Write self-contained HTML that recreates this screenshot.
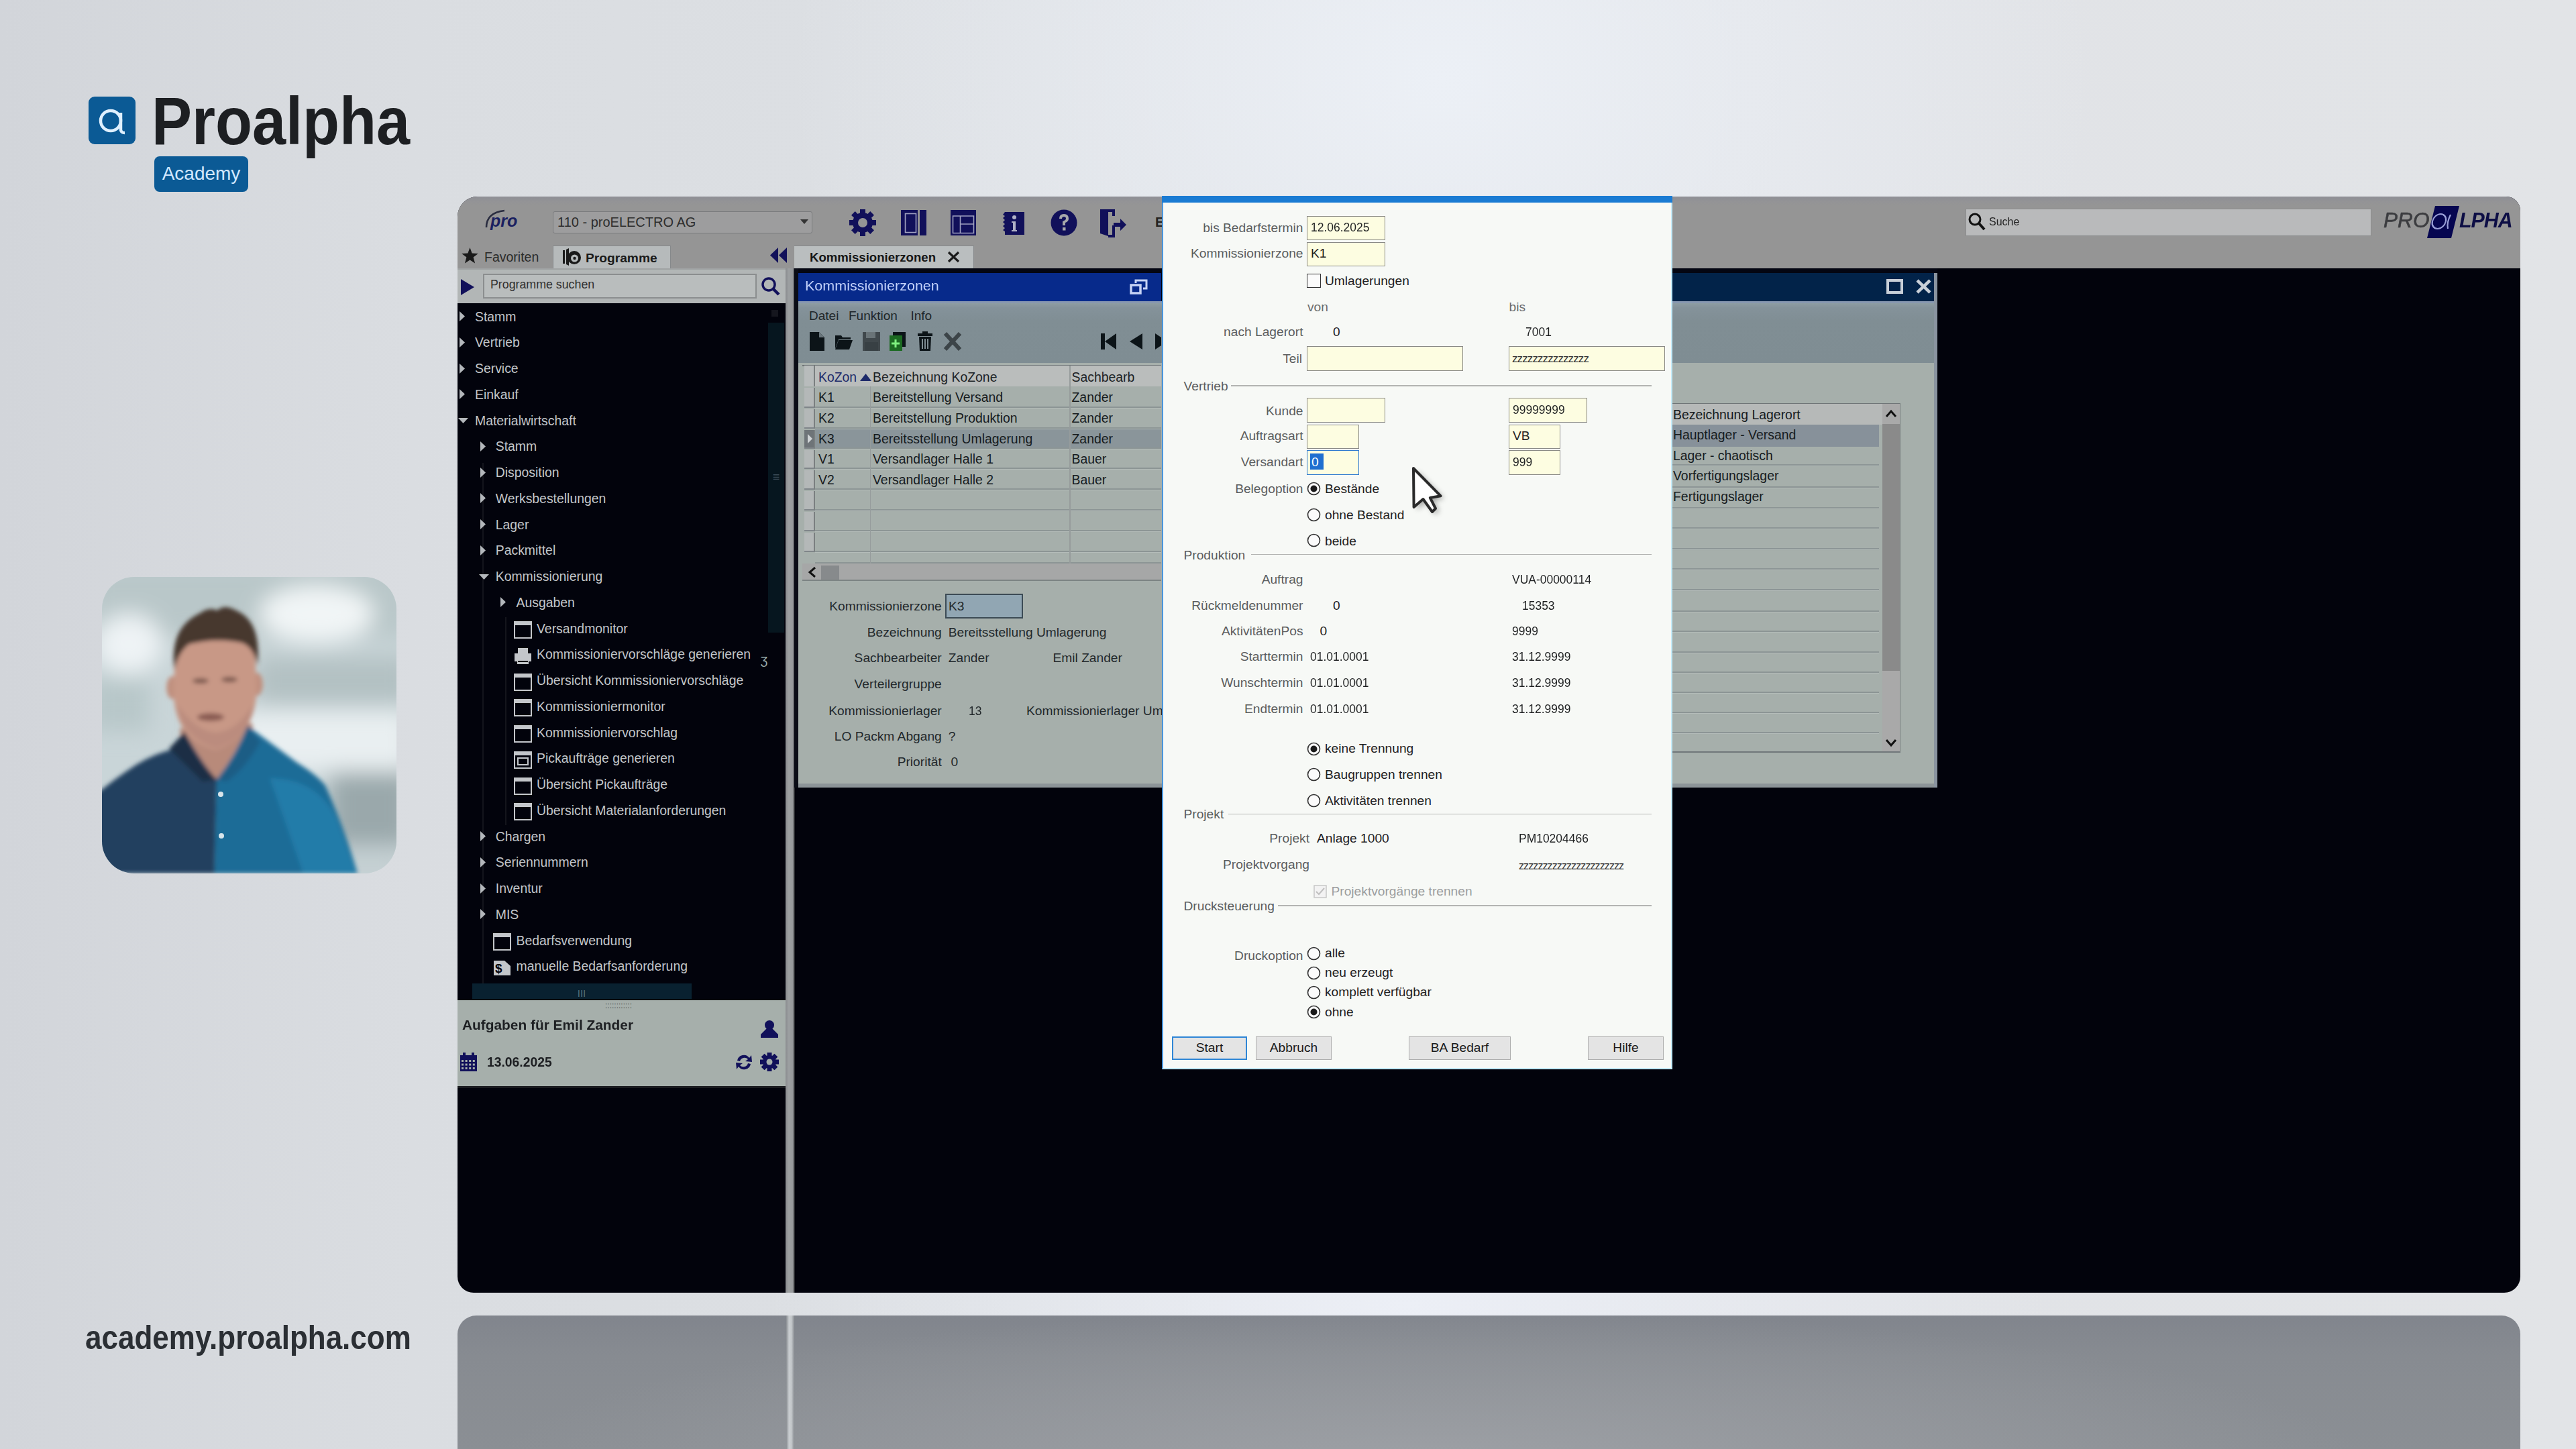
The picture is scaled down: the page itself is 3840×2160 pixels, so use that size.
<!DOCTYPE html>
<html><head><meta charset="utf-8"><title>Proalpha Academy</title>
<style>
html,body{margin:0;padding:0;}
body{width:3840px;height:2160px;position:relative;overflow:hidden;font-family:"Liberation Sans", sans-serif;
background:radial-gradient(ellipse 1300px 1000px at 2150px 120px, rgba(236,240,246,1) 0%, rgba(236,240,246,0) 75%), radial-gradient(ellipse 1200px 300px at 2100px 1945px, rgba(236,239,246,1) 0%, rgba(236,239,246,0) 80%), linear-gradient(90deg,#d2d5da 0%,#dadde1 16%,#dde0e4 40%,#e1e3e7 70%,#e2e4e7 100%);}
div{box-sizing:border-box;}
</style></head><body>
<div style="position:absolute;left:132px;top:144px;width:70px;height:71px;background:#0b5a95;border-radius:9px;"></div><svg style="position:absolute;left:132px;top:144px;" width="70" height="71" viewBox="0 0 70 71"><circle cx="33" cy="36" r="15" fill="none" stroke="#dff0ff" stroke-width="4.5"/><path d="M48 24 L48 50 Q49 54 54 54" fill="none" stroke="#dff0ff" stroke-width="4.5"/></svg><div style="position:absolute;left:226px;top:130.35px;font-size:100px;line-height:1;font-weight:700;color:#1d1f22;white-space:nowrap;transform:scaleX(0.9);transform-origin:left top;">Proalpha</div><div style="position:absolute;left:230px;top:233px;width:140px;height:53px;background:#0b5a95;border-radius:8px;"></div><div style="position:absolute;left:-700px;width:2000px;text-align:center;top:245.30px;font-size:28px;line-height:1;font-weight:400;color:#d2e8ff;white-space:nowrap;">Academy</div><div style="position:absolute;left:127px;top:1968.67px;font-size:50px;line-height:1;font-weight:700;color:#2b2f34;white-space:nowrap;transform:scaleX(0.88);transform-origin:left top;">academy.proalpha.com</div><svg style="position:absolute;left:152px;top:860px;" width="439" height="442" viewBox="0 0 439 442">
    <defs>
      <filter id="bl" x="-50%" y="-50%" width="200%" height="200%"><feGaussianBlur stdDeviation="16"/></filter>
      <filter id="bl2" x="-50%" y="-50%" width="200%" height="200%"><feGaussianBlur stdDeviation="3"/></filter>
      <clipPath id="vc"><rect x="0" y="0" width="439" height="442" rx="48"/></clipPath>
    </defs>
    <g clip-path="url(#vc)">
      <rect width="439" height="442" fill="#c9d5d8"/>
      <g filter="url(#bl)">
        <rect x="-20" y="-20" width="480" height="110" fill="#b9c7c9"/>
        <ellipse cx="320" cy="55" rx="85" ry="42" fill="#f1f5f6"/>
        <ellipse cx="40" cy="100" rx="50" ry="45" fill="#eef3f5"/>
        <rect x="-20" y="150" width="90" height="80" fill="#b8c7c9"/>
        <rect x="230" y="120" width="230" height="70" fill="#b3c1c3"/>
        <rect x="200" y="200" width="260" height="90" fill="#e9eff1"/>
        <rect x="340" y="290" width="120" height="110" fill="#9aa8ab"/>
        <rect x="330" y="400" width="120" height="60" fill="#c5d0d3"/>
      </g>
      <g filter="url(#bl2)">
        <path d="M116 226 L122 285 L176 304 L228 268 L224 218 Z" fill="#b88a7a"/>
        <ellipse cx="105" cy="165" rx="9" ry="17" fill="#c0907f"/>
        <ellipse cx="231" cy="160" rx="9" ry="17" fill="#c0907f"/>
        <path d="M108 132 Q108 86 168 82 Q230 86 229 132 L230 178 Q224 240 170 258 Q112 244 107 180 Z" fill="#c89886"/><path d="M112 190 Q120 240 170 256 Q220 240 226 190 Q200 230 170 232 Q140 230 112 190 Z" fill="#b5887a" opacity="0.7"/>
        <path d="M108 138 Q100 76 146 54 Q160 44 172 50 Q182 40 200 50 Q238 66 232 132 Q226 104 208 98 Q170 90 130 100 Q114 112 108 138 Z" fill="#47372f"/>
        <ellipse cx="147" cy="155" rx="12" ry="4" fill="#7e5a4f"/>
        <ellipse cx="190" cy="153" rx="12" ry="4" fill="#7e5a4f"/>
        <ellipse cx="162" cy="209" rx="20" ry="6" fill="#8a5c52"/>
        <path d="M-10 442 L-10 325 Q20 300 51 280 Q80 262 111 256 L123 231 Q150 280 171 302 L168 442 Z" fill="#223f5e"/>
        <path d="M100 256 L123 231 Q140 275 171 302 L150 305 Z" fill="#1a2d45"/>
        <path d="M168 442 L171 302 Q200 265 217 222 Q255 250 291 277 Q320 295 333 311 Q360 370 381 442 Z" fill="#1f6c97"/>
        <path d="M171 302 Q205 268 217 222 L236 246 Q212 288 186 305 Z" fill="#1a5d85"/>
        <path d="M250 300 Q320 300 350 360 L380 442 L300 442 Z" fill="#2283b0" opacity="0.7"/>
      </g>
      <circle cx="177" cy="324" r="4" fill="#d8e4ea"/>
      <circle cx="178" cy="386" r="4" fill="#d8e4ea"/>
    </g></svg><div style="position:absolute;left:682px;top:1961px;width:3075px;height:239px;background:radial-gradient(ellipse 1400px 240px at 1450px 230px, rgba(158,161,166,1) 0%, rgba(158,161,166,0) 100%), linear-gradient(180deg,#81858d 0%,#878b91 25%,#8c9095 100%);border-radius:28px 28px 0 0;"></div><div style="position:absolute;left:1172px;top:1961px;width:12px;height:199px;background:linear-gradient(90deg,#8a8e93 0%,#c9cdd0 35%,#c4c8cb 65%,#8a8e93 100%);"></div><div style="position:absolute;left:682px;top:293px;width:3075px;height:1634px;background:#02030c;border-radius:30px 21px 24px 24px;overflow:hidden;"></div><div style="position:absolute;left:682px;top:293px;width:3075px;height:107px;background:linear-gradient(180deg,#8e8f95 0px,#939396 7px,#959595 12px,#959595 100%);border-radius:30px 21px 0 0;"></div><svg style="position:absolute;left:718px;top:308px;" width="52" height="38" viewBox="0 0 52 38"><path d="M7 31 Q7 9 34 6" fill="none" stroke="#2a2d40" stroke-width="2.6"/></svg><div style="position:absolute;left:731px;top:316.84px;font-size:25px;line-height:1;font-weight:700;color:#1a2060;white-space:nowrap;font-style:italic;">pro</div><div style="position:absolute;left:824px;top:315px;width:387px;height:33px;background:#9d9d9e;border:1.5px solid #7a7b7d;border-radius:3px;"></div><div style="position:absolute;left:831px;top:321.07px;font-size:20px;line-height:1;font-weight:400;color:#2d2d2d;white-space:nowrap;">110 - proELECTRO AG</div><svg style="position:absolute;left:1193px;top:327px;" width="12" height="8" viewBox="0 0 12 8"><path d="M0 0 L12 0 L6 7 Z" fill="#333"/></svg><svg style="position:absolute;left:1264px;top:310px;" width="44" height="44" viewBox="0 0 44 44"><rect x="18" y="2" width="8" height="9" fill="#11105a" transform="rotate(0 22 22)"/><rect x="18" y="2" width="8" height="9" fill="#11105a" transform="rotate(45 22 22)"/><rect x="18" y="2" width="8" height="9" fill="#11105a" transform="rotate(90 22 22)"/><rect x="18" y="2" width="8" height="9" fill="#11105a" transform="rotate(135 22 22)"/><rect x="18" y="2" width="8" height="9" fill="#11105a" transform="rotate(180 22 22)"/><rect x="18" y="2" width="8" height="9" fill="#11105a" transform="rotate(225 22 22)"/><rect x="18" y="2" width="8" height="9" fill="#11105a" transform="rotate(270 22 22)"/><rect x="18" y="2" width="8" height="9" fill="#11105a" transform="rotate(315 22 22)"/><circle cx="22" cy="22" r="15" fill="#11105a"/><circle cx="22" cy="22" r="7" fill="#959595"/></svg><svg style="position:absolute;left:1342px;top:312px;" width="40" height="40" viewBox="0 0 40 40"><rect x="1" y="1" width="38" height="38" fill="#11105a"/><rect x="7.5" y="6.5" width="16" height="28" fill="none" stroke="#9fa0c0" stroke-width="1.6"/><rect x="26" y="1" width="3" height="38" fill="#959595"/></svg><svg style="position:absolute;left:1416px;top:312px;" width="40" height="40" viewBox="0 0 40 40"><rect x="1" y="1" width="38" height="38" fill="#11105a"/><path d="M4.5 10 L4.5 35.5 L35.5 35.5 L35.5 10 Z M15.5 10 L15.5 35.5 M15.5 22 L35.5 22" fill="none" stroke="#9fa0c0" stroke-width="1.6"/></svg><svg style="position:absolute;left:1493px;top:312px;" width="36" height="40" viewBox="0 0 36 40"><path d="M5 4 L34 4 L34 38 L5 38 L5 33 L2 31 L5 28 L2 25 L5 22 L2 19 L5 16 L2 13 L5 10 L2 8 Z" fill="#11105a"/><circle cx="19" cy="12" r="3" fill="#b0b1c6"/><path d="M15 18 L21 18 L21 31 L23 31 L23 33 L15 33 L15 31 L17 31 L17 20 L15 20 Z" fill="#b0b1c6"/></svg><svg style="position:absolute;left:1565px;top:311px;" width="42" height="42" viewBox="0 0 42 42"><circle cx="21" cy="21" r="19.5" fill="#11105a"/><path d="M14 15 Q14 8 21 8 Q28 8 28 15 Q28 19 23 21 L23 25 L19 25 L19 19 Q24 17 24 15 Q24 12 21 12 Q18 12 18 15 Z" fill="#a7a8aa"/><rect x="19" y="28" width="4.5" height="4.5" fill="#a7a8aa"/></svg><svg style="position:absolute;left:1638px;top:310px;" width="42" height="44" viewBox="0 0 42 44"><path d="M2 2 L24 2 L24 12 L20 12 L20 6 L14 6 L14 42 L2 38 Z" fill="#11105a"/><path d="M20 26 L20 40 L14 40 L14 44 L24 44 L24 26 Z" fill="#11105a"/><path d="M22 22 L32 22 L32 16 L41 25 L32 34 L32 28 L22 28 Z" fill="#11105a"/></svg><div style="position:absolute;left:1722px;top:321.07px;font-size:20px;line-height:1;font-weight:700;color:#222;white-space:nowrap;">E</div><div style="position:absolute;left:2930px;top:311px;width:605px;height:41px;background:#b9babb;border:1.5px solid #8a8b8c;"></div><svg style="position:absolute;left:2933px;top:316px;" width="28" height="30" viewBox="0 0 28 30"><circle cx="11" cy="11" r="8" fill="none" stroke="#111" stroke-width="3"/><path d="M17 17 L25 26" stroke="#111" stroke-width="4"/></svg><div style="position:absolute;left:2965px;top:321.61px;font-size:17px;line-height:1;font-weight:400;color:#222;white-space:nowrap;transform:scaleX(0.94);transform-origin:left top;">Suche</div><div style="position:absolute;left:3553px;top:312.76px;font-size:31px;line-height:1;font-weight:400;color:#3c3d40;white-space:nowrap;transform:scaleX(1.02);transform-origin:left top;font-style:italic;-webkit-text-stroke:0.6px #3c3d40;">PRO</div><svg style="position:absolute;left:3616px;top:306px;" width="52" height="50" viewBox="0 0 52 50"><path d="M14 1 L50 1 L38 49 L2 49 Z" fill="#060650"/><ellipse cx="25" cy="24" rx="10" ry="11" transform="skewX(-12)" fill="none" stroke="#9aa0d8" stroke-width="2.2"/><path d="M37 14 Q31 26 33 35" fill="none" stroke="#9aa0d8" stroke-width="2.2"/></svg><div style="position:absolute;left:3666px;top:312.76px;font-size:31px;line-height:1;font-weight:700;color:#0d0e45;white-space:nowrap;transform:scaleX(0.98);transform-origin:left top;font-style:italic;letter-spacing:-1px;">LPHA</div><svg style="position:absolute;left:688px;top:369px;" width="25" height="24" viewBox="0 0 25 24"><path d="M12.5 0 L15.6 8.6 L24.8 8.9 L17.6 14.6 L20.1 23.5 L12.5 18.4 L4.9 23.5 L7.4 14.6 L0.2 8.9 L9.4 8.6 Z" fill="#1a1a1a"/></svg><div style="position:absolute;left:722px;top:374.49px;font-size:19.5px;line-height:1;font-weight:400;color:#2a2a2a;white-space:nowrap;">Favoriten</div><div style="position:absolute;left:824px;top:366px;width:176px;height:35px;background:#b6babb;border-top:1.5px solid #85888a;border-left:1.5px solid #85888a;border-right:1.5px solid #85888a;"></div><svg style="position:absolute;left:838px;top:368px;" width="28" height="30" viewBox="0 0 28 30"><rect x="1" y="5" width="3" height="20" fill="#1a1a1a"/><path d="M6 4 L10 2 L10 28 L6 26 Z" fill="#1a1a1a"/><circle cx="18" cy="16" r="10" fill="#1a1a1a"/><circle cx="18.5" cy="17" r="5.5" fill="#b6babb"/><circle cx="18.5" cy="17" r="2.2" fill="#1a1a1a"/></svg><div style="position:absolute;left:873px;top:374.75px;font-size:19.2px;line-height:1;font-weight:700;color:#1a1a1a;white-space:nowrap;">Programme</div><svg style="position:absolute;left:1148px;top:369px;" width="26" height="23" viewBox="0 0 26 23"><path d="M12 0 L12 23 L0 11.5 Z" fill="#11105a"/><path d="M25 0 L25 23 L13 11.5 Z" fill="#11105a"/></svg><div style="position:absolute;left:1184px;top:366px;width:268px;height:35px;background:#babebf;border-top:1.5px solid #85888a;border-right:1.5px solid #85888a;"></div><div style="position:absolute;left:1207px;top:375.26px;font-size:18.6px;line-height:1;font-weight:700;color:#161616;white-space:nowrap;">Kommissionierzonen</div><svg style="position:absolute;left:1412px;top:374px;" width="19" height="18" viewBox="0 0 19 18"><path d="M2 2 L17 16 M17 2 L2 16" stroke="#1a1a1a" stroke-width="3.2"/></svg><div style="position:absolute;left:1171px;top:400px;width:12px;height:1527px;background:linear-gradient(90deg,#8a8c8f 0%,#9c9fa1 40%,#95979a 100%);"></div><div style="position:absolute;left:1183px;top:400px;width:2px;height:1527px;background:#2a2c30;"></div><div style="position:absolute;left:682px;top:400px;width:489px;height:52px;background:#b2b6b6;border-top:2px solid #a0a3a4;"></div><svg style="position:absolute;left:686px;top:415px;" width="22" height="26" viewBox="0 0 22 26"><path d="M1 1 L21 13 L1 25 Z" fill="#11105a"/></svg><div style="position:absolute;left:720px;top:408px;width:408px;height:37px;background:#b9bdbd;border:2px solid #8b8e8f;"></div><div style="position:absolute;left:731px;top:415.93px;font-size:17.8px;line-height:1;font-weight:400;color:#303030;white-space:nowrap;">Programme suchen</div><svg style="position:absolute;left:1134px;top:412px;" width="30" height="30" viewBox="0 0 30 30"><circle cx="12" cy="12" r="9" fill="none" stroke="#11105a" stroke-width="3.5"/><path d="M18 18 L27 27" stroke="#11105a" stroke-width="4.5"/></svg><div style="position:absolute;left:682px;top:452px;width:489px;height:1039px;background:#02030c;"></div><div style="position:absolute;left:1145px;top:481px;width:24px;height:462px;background:#06161f;"></div><div style="position:absolute;left:1150px;top:462px;width:10px;height:10px;background:#15161e;"></div><div style="position:absolute;left:157px;width:2000px;text-align:center;top:701.76px;font-size:18px;line-height:1;font-weight:400;color:#3a4a55;white-space:nowrap;">≡</div><div style="position:absolute;left:719px;top:690px;width:2px;height:790px;background:#14151c;"></div><div style="position:absolute;left:753px;top:920px;width:2px;height:310px;background:#14151c;"></div><div style="position:absolute;left:688px;top:660px;width:2px;height:10px;background:#02030c;"></div><svg style="position:absolute;left:685.0px;top:464.0px;" width="9" height="15" viewBox="0 0 9 15"><path d="M0 0 L8 7.5 L0 15 Z" fill="#b4b8bc"/></svg><div style="position:absolute;left:708.0px;top:462.58px;font-size:19.4px;line-height:1;font-weight:400;color:#c3c6ca;white-space:nowrap;">Stamm</div><svg style="position:absolute;left:685.0px;top:502.75px;" width="9" height="15" viewBox="0 0 9 15"><path d="M0 0 L8 7.5 L0 15 Z" fill="#b4b8bc"/></svg><div style="position:absolute;left:708.0px;top:501.33px;font-size:19.4px;line-height:1;font-weight:400;color:#c3c6ca;white-space:nowrap;">Vertrieb</div><svg style="position:absolute;left:685.0px;top:541.5px;" width="9" height="15" viewBox="0 0 9 15"><path d="M0 0 L8 7.5 L0 15 Z" fill="#b4b8bc"/></svg><div style="position:absolute;left:708.0px;top:540.08px;font-size:19.4px;line-height:1;font-weight:400;color:#c3c6ca;white-space:nowrap;">Service</div><svg style="position:absolute;left:685.0px;top:580.25px;" width="9" height="15" viewBox="0 0 9 15"><path d="M0 0 L8 7.5 L0 15 Z" fill="#b4b8bc"/></svg><div style="position:absolute;left:708.0px;top:578.83px;font-size:19.4px;line-height:1;font-weight:400;color:#c3c6ca;white-space:nowrap;">Einkauf</div><svg style="position:absolute;left:683.0px;top:623.0px;" width="15" height="9" viewBox="0 0 15 9"><path d="M0 0 L15 0 L7.5 8 Z" fill="#b4b8bc"/></svg><div style="position:absolute;left:708.0px;top:617.58px;font-size:19.4px;line-height:1;font-weight:400;color:#c3c6ca;white-space:nowrap;">Materialwirtschaft</div><svg style="position:absolute;left:715.5px;top:657.75px;" width="9" height="15" viewBox="0 0 9 15"><path d="M0 0 L8 7.5 L0 15 Z" fill="#b4b8bc"/></svg><div style="position:absolute;left:738.75px;top:656.33px;font-size:19.4px;line-height:1;font-weight:400;color:#c3c6ca;white-space:nowrap;">Stamm</div><svg style="position:absolute;left:715.5px;top:696.5px;" width="9" height="15" viewBox="0 0 9 15"><path d="M0 0 L8 7.5 L0 15 Z" fill="#b4b8bc"/></svg><div style="position:absolute;left:738.75px;top:695.08px;font-size:19.4px;line-height:1;font-weight:400;color:#c3c6ca;white-space:nowrap;">Disposition</div><svg style="position:absolute;left:715.5px;top:735.25px;" width="9" height="15" viewBox="0 0 9 15"><path d="M0 0 L8 7.5 L0 15 Z" fill="#b4b8bc"/></svg><div style="position:absolute;left:738.75px;top:733.83px;font-size:19.4px;line-height:1;font-weight:400;color:#c3c6ca;white-space:nowrap;">Werksbestellungen</div><svg style="position:absolute;left:715.5px;top:774.0px;" width="9" height="15" viewBox="0 0 9 15"><path d="M0 0 L8 7.5 L0 15 Z" fill="#b4b8bc"/></svg><div style="position:absolute;left:738.75px;top:772.58px;font-size:19.4px;line-height:1;font-weight:400;color:#c3c6ca;white-space:nowrap;">Lager</div><svg style="position:absolute;left:715.5px;top:812.75px;" width="9" height="15" viewBox="0 0 9 15"><path d="M0 0 L8 7.5 L0 15 Z" fill="#b4b8bc"/></svg><div style="position:absolute;left:738.75px;top:811.33px;font-size:19.4px;line-height:1;font-weight:400;color:#c3c6ca;white-space:nowrap;">Packmittel</div><svg style="position:absolute;left:713.5px;top:855.5px;" width="15" height="9" viewBox="0 0 15 9"><path d="M0 0 L15 0 L7.5 8 Z" fill="#b4b8bc"/></svg><div style="position:absolute;left:738.75px;top:850.08px;font-size:19.4px;line-height:1;font-weight:400;color:#c3c6ca;white-space:nowrap;">Kommissionierung</div><svg style="position:absolute;left:746.0px;top:890.25px;" width="9" height="15" viewBox="0 0 9 15"><path d="M0 0 L8 7.5 L0 15 Z" fill="#b4b8bc"/></svg><div style="position:absolute;left:769.5px;top:888.83px;font-size:19.4px;line-height:1;font-weight:400;color:#c3c6ca;white-space:nowrap;">Ausgaben</div><svg style="position:absolute;left:765.5px;top:926.0px;" width="27" height="27" viewBox="0 0 27 27"><rect x="1" y="1" width="25" height="24" fill="none" stroke="#c3c6ca" stroke-width="2"/><rect x="1" y="1" width="25" height="5" fill="#c3c6ca"/></svg><div style="position:absolute;left:800px;top:927.58px;font-size:19.4px;line-height:1;font-weight:400;color:#c3c6ca;white-space:nowrap;">Versandmonitor</div><svg style="position:absolute;left:765.5px;top:964.75px;" width="27" height="27" viewBox="0 0 27 27"><rect x="6" y="1" width="15" height="8" fill="#c3c6ca"/><rect x="1" y="9" width="25" height="12" fill="#c3c6ca"/><rect x="5" y="18" width="17" height="7" fill="#c3c6ca"/><rect x="6" y="20" width="15" height="2" fill="#02030c"/></svg><div style="position:absolute;left:800px;top:966.33px;font-size:19.4px;line-height:1;font-weight:400;color:#c3c6ca;white-space:nowrap;">Kommissioniervorschläge generieren</div><svg style="position:absolute;left:765.5px;top:1003.5px;" width="27" height="27" viewBox="0 0 27 27"><rect x="1" y="1" width="25" height="24" fill="none" stroke="#c3c6ca" stroke-width="2"/><rect x="1" y="1" width="25" height="5" fill="#c3c6ca"/></svg><div style="position:absolute;left:800px;top:1005.08px;font-size:19.4px;line-height:1;font-weight:400;color:#c3c6ca;white-space:nowrap;">Übersicht Kommissioniervorschläge</div><svg style="position:absolute;left:765.5px;top:1042.25px;" width="27" height="27" viewBox="0 0 27 27"><rect x="1" y="1" width="25" height="24" fill="none" stroke="#c3c6ca" stroke-width="2"/><rect x="1" y="1" width="25" height="5" fill="#c3c6ca"/></svg><div style="position:absolute;left:800px;top:1043.83px;font-size:19.4px;line-height:1;font-weight:400;color:#c3c6ca;white-space:nowrap;">Kommissioniermonitor</div><svg style="position:absolute;left:765.5px;top:1081.0px;" width="27" height="27" viewBox="0 0 27 27"><rect x="1" y="1" width="25" height="24" fill="none" stroke="#c3c6ca" stroke-width="2"/><rect x="1" y="1" width="25" height="5" fill="#c3c6ca"/></svg><div style="position:absolute;left:800px;top:1082.58px;font-size:19.4px;line-height:1;font-weight:400;color:#c3c6ca;white-space:nowrap;">Kommissioniervorschlag</div><svg style="position:absolute;left:765.5px;top:1119.75px;" width="27" height="27" viewBox="0 0 27 27"><rect x="1" y="1" width="25" height="24" fill="none" stroke="#c3c6ca" stroke-width="2"/><rect x="1" y="1" width="25" height="5" fill="#c3c6ca"/><rect x="6" y="10" width="15" height="10" fill="none" stroke="#c3c6ca" stroke-width="2"/></svg><div style="position:absolute;left:800px;top:1121.33px;font-size:19.4px;line-height:1;font-weight:400;color:#c3c6ca;white-space:nowrap;">Pickaufträge generieren</div><svg style="position:absolute;left:765.5px;top:1158.5px;" width="27" height="27" viewBox="0 0 27 27"><rect x="1" y="1" width="25" height="24" fill="none" stroke="#c3c6ca" stroke-width="2"/><rect x="1" y="1" width="25" height="5" fill="#c3c6ca"/></svg><div style="position:absolute;left:800px;top:1160.08px;font-size:19.4px;line-height:1;font-weight:400;color:#c3c6ca;white-space:nowrap;">Übersicht Pickaufträge</div><svg style="position:absolute;left:765.5px;top:1197.25px;" width="27" height="27" viewBox="0 0 27 27"><rect x="1" y="1" width="25" height="24" fill="none" stroke="#c3c6ca" stroke-width="2"/><rect x="1" y="1" width="25" height="5" fill="#c3c6ca"/></svg><div style="position:absolute;left:800px;top:1198.83px;font-size:19.4px;line-height:1;font-weight:400;color:#c3c6ca;white-space:nowrap;">Übersicht Materialanforderungen</div><svg style="position:absolute;left:715.5px;top:1239.0px;" width="9" height="15" viewBox="0 0 9 15"><path d="M0 0 L8 7.5 L0 15 Z" fill="#b4b8bc"/></svg><div style="position:absolute;left:738.75px;top:1237.58px;font-size:19.4px;line-height:1;font-weight:400;color:#c3c6ca;white-space:nowrap;">Chargen</div><svg style="position:absolute;left:715.5px;top:1277.75px;" width="9" height="15" viewBox="0 0 9 15"><path d="M0 0 L8 7.5 L0 15 Z" fill="#b4b8bc"/></svg><div style="position:absolute;left:738.75px;top:1276.33px;font-size:19.4px;line-height:1;font-weight:400;color:#c3c6ca;white-space:nowrap;">Seriennummern</div><svg style="position:absolute;left:715.5px;top:1316.5px;" width="9" height="15" viewBox="0 0 9 15"><path d="M0 0 L8 7.5 L0 15 Z" fill="#b4b8bc"/></svg><div style="position:absolute;left:738.75px;top:1315.08px;font-size:19.4px;line-height:1;font-weight:400;color:#c3c6ca;white-space:nowrap;">Inventur</div><svg style="position:absolute;left:715.5px;top:1355.25px;" width="9" height="15" viewBox="0 0 9 15"><path d="M0 0 L8 7.5 L0 15 Z" fill="#b4b8bc"/></svg><div style="position:absolute;left:738.75px;top:1353.83px;font-size:19.4px;line-height:1;font-weight:400;color:#c3c6ca;white-space:nowrap;">MIS</div><svg style="position:absolute;left:735px;top:1391.0px;" width="27" height="27" viewBox="0 0 27 27"><rect x="1" y="1" width="25" height="24" fill="none" stroke="#c3c6ca" stroke-width="2"/><rect x="1" y="1" width="25" height="5" fill="#c3c6ca"/></svg><div style="position:absolute;left:769.5px;top:1392.58px;font-size:19.4px;line-height:1;font-weight:400;color:#c3c6ca;white-space:nowrap;">Bedarfsverwendung</div><svg style="position:absolute;left:735px;top:1429.75px;" width="27" height="27" viewBox="0 0 27 27"><rect x="1" y="2" width="25" height="22" fill="#c3c6ca"/><text x="3" y="20" font-family="Liberation Sans" font-weight="700" font-size="19" fill="#02030c">$</text><rect x="17" y="2" width="9" height="8" fill="#02030c"/><path d="M17 2 L26 10 L17 10 Z" fill="#c3c6ca"/></svg><div style="position:absolute;left:769.5px;top:1431.33px;font-size:19.4px;line-height:1;font-weight:400;color:#c3c6ca;white-space:nowrap;">manuelle Bedarfsanforderung</div><div style="position:absolute;left:139px;width:2000px;text-align:center;top:973.07px;font-size:20px;line-height:1;font-weight:400;color:#9aa;white-space:nowrap;">ʒ</div><div style="position:absolute;left:704px;top:1466px;width:327px;height:23px;background:#092130;"></div><div style="position:absolute;left:-133px;width:2000px;text-align:center;top:1473.30px;font-size:15px;line-height:1;font-weight:400;color:#56707c;white-space:nowrap;">III</div><div style="position:absolute;left:682px;top:1491px;width:489px;height:129px;background:#a6afab;"></div><div style="position:absolute;left:-78px;width:2000px;text-align:center;top:1492.84px;font-size:12px;line-height:1;font-weight:400;color:#444;white-space:nowrap;">::::::::::::</div><div style="position:absolute;left:689px;top:1519.49px;font-size:19.5px;line-height:1;font-weight:700;color:#1d1f22;white-space:nowrap;transform:scaleX(1.07);transform-origin:left top;">Aufgaben für Emil Zander</div><svg style="position:absolute;left:1133px;top:1520px;" width="28" height="28" viewBox="0 0 28 28"><circle cx="14" cy="8" r="7" fill="#11105a"/><path d="M10 13 L18 13 L27 22 L27 27 L1 27 L1 22 Z" fill="#11105a"/></svg><svg style="position:absolute;left:685px;top:1569px;" width="27" height="29" viewBox="0 0 27 29"><rect x="1" y="4" width="25" height="24" fill="#11105a"/><rect x="5" y="0" width="4" height="6" fill="#11105a"/><rect x="18" y="0" width="4" height="6" fill="#11105a"/><rect x="3.0" y="11.0" width="3" height="3" fill="#a6afab"/><rect x="3.0" y="16.5" width="3" height="3" fill="#a6afab"/><rect x="3.0" y="22.0" width="3" height="3" fill="#a6afab"/><rect x="8.6" y="11.0" width="3" height="3" fill="#a6afab"/><rect x="8.6" y="16.5" width="3" height="3" fill="#a6afab"/><rect x="8.6" y="22.0" width="3" height="3" fill="#a6afab"/><rect x="14.2" y="11.0" width="3" height="3" fill="#a6afab"/><rect x="14.2" y="16.5" width="3" height="3" fill="#a6afab"/><rect x="14.2" y="22.0" width="3" height="3" fill="#a6afab"/><rect x="19.799999999999997" y="11.0" width="3" height="3" fill="#a6afab"/><rect x="19.799999999999997" y="16.5" width="3" height="3" fill="#a6afab"/><rect x="19.799999999999997" y="22.0" width="3" height="3" fill="#a6afab"/></svg><div style="position:absolute;left:726px;top:1574.49px;font-size:19.5px;line-height:1;font-weight:700;color:#1d1f22;white-space:nowrap;transform:scaleX(0.99);transform-origin:left top;">13.06.2025</div><svg style="position:absolute;left:1095px;top:1569px;" width="28" height="29" viewBox="0 0 28 29"><path d="M4 12 A10 10 0 0 1 22 8 L25 4 L26 14 L16 13 L20 10 A7 7 0 0 0 8 13 Z" fill="#11105a"/><path d="M24 17 A10 10 0 0 1 6 21 L3 25 L2 15 L12 16 L8 19 A7 7 0 0 0 20 16 Z" fill="#11105a"/></svg><svg style="position:absolute;left:1133px;top:1569px;" width="28" height="28" viewBox="0 0 28 28"><rect x="10.5" y="0" width="7" height="8" fill="#11105a" transform="rotate(0 14 14)"/><rect x="10.5" y="0" width="7" height="8" fill="#11105a" transform="rotate(45 14 14)"/><rect x="10.5" y="0" width="7" height="8" fill="#11105a" transform="rotate(90 14 14)"/><rect x="10.5" y="0" width="7" height="8" fill="#11105a" transform="rotate(135 14 14)"/><rect x="10.5" y="0" width="7" height="8" fill="#11105a" transform="rotate(180 14 14)"/><rect x="10.5" y="0" width="7" height="8" fill="#11105a" transform="rotate(225 14 14)"/><rect x="10.5" y="0" width="7" height="8" fill="#11105a" transform="rotate(270 14 14)"/><rect x="10.5" y="0" width="7" height="8" fill="#11105a" transform="rotate(315 14 14)"/><circle cx="14" cy="14" r="10" fill="#11105a"/><circle cx="14" cy="14" r="4.5" fill="#a6afab"/></svg><div style="position:absolute;left:682px;top:1619px;width:489px;height:3px;background:#1a1b20;"></div><div style="position:absolute;left:1184px;top:400px;width:1704px;height:7px;background:#040612;"></div><div style="position:absolute;left:1184px;top:400px;width:6px;height:774px;background:#0a0c16;"></div><div style="position:absolute;left:1190px;top:407px;width:541px;height:42px;background:#072a8b;"></div><div style="position:absolute;left:2490px;top:407px;width:393px;height:42px;background:#022349;"></div><div style="position:absolute;left:1190px;top:449px;width:1693px;height:3px;background:#8797b0;"></div><div style="position:absolute;left:1190px;top:452px;width:1693px;height:89px;background:linear-gradient(180deg,#8d9ca2 0%,#84929a 8%,#808e94 30%,#7f8d93 100%);"></div><div style="position:absolute;left:1190px;top:541px;width:1693px;height:627px;background:#a6afab;"></div><div style="position:absolute;left:1190px;top:1168px;width:1698px;height:6px;background:#8c9498;"></div><div style="position:absolute;left:2883px;top:407px;width:5px;height:767px;background:#8a94a0;"></div><div style="position:absolute;left:1200px;top:415.65px;font-size:20.5px;line-height:1;font-weight:400;color:#c3d2fb;white-space:nowrap;transform:scaleX(1.05);transform-origin:left top;">Kommissionierzonen</div><svg style="position:absolute;left:1684px;top:416px;" width="28" height="24" viewBox="0 0 28 24"><rect x="2" y="9" width="14" height="12" fill="none" stroke="#c6d3f5" stroke-width="3.5"/><path d="M9 6 L9 2 L25 2 L25 14 L20 14" fill="none" stroke="#c6d3f5" stroke-width="3"/></svg><svg style="position:absolute;left:2812px;top:416px;" width="25" height="22" viewBox="0 0 25 22"><rect x="2" y="2" width="21" height="18" fill="none" stroke="#c9d0d8" stroke-width="4"/></svg><svg style="position:absolute;left:2855px;top:416px;" width="25" height="22" viewBox="0 0 25 22"><path d="M3 2 L22 20 M22 2 L3 20" stroke="#c9d0d8" stroke-width="4.5"/></svg><div style="position:absolute;left:1206px;top:461.42px;font-size:19px;line-height:1;font-weight:400;color:#20262a;white-space:nowrap;">Datei</div><div style="position:absolute;left:1265px;top:461.42px;font-size:19px;line-height:1;font-weight:400;color:#20262a;white-space:nowrap;">Funktion</div><div style="position:absolute;left:1357.5px;top:461.42px;font-size:19px;line-height:1;font-weight:400;color:#20262a;white-space:nowrap;">Info</div><svg style="position:absolute;left:1206px;top:494px;" width="24" height="30" viewBox="0 0 24 30"><path d="M1 1 L15 1 L23 9 L23 29 L1 29 Z" fill="#0c1418"/><path d="M15 1 L15 9 L23 9" fill="#6a767c"/></svg><svg style="position:absolute;left:1244px;top:496px;" width="28" height="26" viewBox="0 0 28 26"><path d="M1 4 L10 4 L12 7 L24 7 L24 10 L6 10 L1 24 Z" fill="#0c1418"/><path d="M6 11 L27 11 L22 25 L1 25 Z" fill="#0c1418"/></svg><svg style="position:absolute;left:1285px;top:494px;" width="28" height="30" viewBox="0 0 28 30"><rect x="1" y="1" width="26" height="28" fill="#40484c"/><rect x="6" y="1" width="14" height="9" fill="#6a7478"/><rect x="4" y="16" width="20" height="13" fill="#384044"/></svg><svg style="position:absolute;left:1325px;top:494px;" width="26" height="30" viewBox="0 0 26 30"><rect x="6" y="1" width="19" height="22" fill="#0c1418"/><rect x="1" y="6" width="19" height="23" fill="#1c6a22"/><path d="M10 12 L10 24 M4 18 L16 18" stroke="#7ef07e" stroke-width="3"/></svg><svg style="position:absolute;left:1367px;top:494px;" width="24" height="30" viewBox="0 0 24 30"><rect x="1" y="3" width="22" height="4" fill="#0c1418"/><rect x="8" y="0" width="8" height="4" fill="#0c1418"/><path d="M3 8 L21 8 L20 29 L4 29 Z" fill="#0c1418"/><path d="M8 11 L8 26 M12 11 L12 26 M16 11 L16 26" stroke="#7e8c92" stroke-width="2"/></svg><svg style="position:absolute;left:1406px;top:494px;" width="28" height="30" viewBox="0 0 28 30"><path d="M3 3 L25 27 M25 3 L3 27" stroke="#3c4448" stroke-width="6"/></svg><svg style="position:absolute;left:1640px;top:496px;" width="26" height="26" viewBox="0 0 26 26"><rect x="1" y="1" width="6" height="24" fill="#0c1418"/><path d="M24 1 L24 25 L7 13 Z" fill="#0c1418"/></svg><svg style="position:absolute;left:1682px;top:496px;" width="22" height="26" viewBox="0 0 22 26"><path d="M21 1 L21 25 L2 13 Z" fill="#0c1418"/></svg><svg style="position:absolute;left:1722px;top:496px;" width="10" height="26" viewBox="0 0 10 26"><path d="M0 1 L9 7 L9 19 L0 25 Z" fill="#0c1418"/></svg><div style="position:absolute;left:1196px;top:544px;width:535px;height:322px;background:#a6afab;"></div><div style="position:absolute;left:1196px;top:544px;width:535px;height:1.5px;background:#6f7577;"></div><div style="position:absolute;left:1215px;top:545px;width:516px;height:31px;background:#babdbc;"></div><div style="position:absolute;left:1199px;top:545px;width:16px;height:31px;background:#b8bcbc;border-right:2px solid #7a7f80;"></div><div style="position:absolute;left:1215px;top:639px;width:516px;height:30px;background:#8a959a;"></div><div style="position:absolute;left:1199px;top:578px;width:16px;height:30px;background:#b4b8b8;border-right:2px solid #7a7f80;border-bottom:2px solid #80868a;"></div><div style="position:absolute;left:1215px;top:606px;width:516px;height:2px;background:#8c9595;"></div><div style="position:absolute;left:1215px;top:608px;width:516px;height:1.2000000000000455px;background:#b4bcb9;"></div><div style="position:absolute;left:1199px;top:610px;width:16px;height:29px;background:#b4b8b8;border-right:2px solid #7a7f80;border-bottom:2px solid #80868a;"></div><div style="position:absolute;left:1215px;top:637px;width:516px;height:2px;background:#8c9595;"></div><div style="position:absolute;left:1215px;top:639px;width:516px;height:1.2000000000000455px;background:#b4bcb9;"></div><div style="position:absolute;left:1199px;top:641px;width:16px;height:28px;background:#6e7478;border-right:2px solid #7a7f80;border-bottom:2px solid #80868a;"></div><div style="position:absolute;left:1215px;top:667px;width:516px;height:2px;background:#8c9595;"></div><div style="position:absolute;left:1215px;top:669px;width:516px;height:1.2000000000000455px;background:#b4bcb9;"></div><div style="position:absolute;left:1199px;top:671px;width:16px;height:28px;background:#b4b8b8;border-right:2px solid #7a7f80;border-bottom:2px solid #80868a;"></div><div style="position:absolute;left:1215px;top:697px;width:516px;height:2px;background:#8c9595;"></div><div style="position:absolute;left:1215px;top:699px;width:516px;height:1.2000000000000455px;background:#b4bcb9;"></div><div style="position:absolute;left:1199px;top:701px;width:16px;height:29px;background:#b4b8b8;border-right:2px solid #7a7f80;border-bottom:2px solid #80868a;"></div><div style="position:absolute;left:1215px;top:728px;width:516px;height:2px;background:#8c9595;"></div><div style="position:absolute;left:1215px;top:730px;width:516px;height:1.2000000000000455px;background:#b4bcb9;"></div><div style="position:absolute;left:1199px;top:732px;width:16px;height:29px;background:#b4b8b8;border-right:2px solid #7a7f80;border-bottom:2px solid #80868a;"></div><div style="position:absolute;left:1215px;top:759px;width:516px;height:2px;background:#8c9595;"></div><div style="position:absolute;left:1215px;top:761px;width:516px;height:1.2000000000000455px;background:#b4bcb9;"></div><div style="position:absolute;left:1199px;top:763px;width:16px;height:29px;background:#b4b8b8;border-right:2px solid #7a7f80;border-bottom:2px solid #80868a;"></div><div style="position:absolute;left:1215px;top:790px;width:516px;height:2px;background:#8c9595;"></div><div style="position:absolute;left:1215px;top:792px;width:516px;height:1.2000000000000455px;background:#b4bcb9;"></div><div style="position:absolute;left:1199px;top:794px;width:16px;height:28.5px;background:#b4b8b8;border-right:2px solid #7a7f80;border-bottom:2px solid #80868a;"></div><div style="position:absolute;left:1215px;top:820.5px;width:516px;height:2.0px;background:#8c9595;"></div><div style="position:absolute;left:1215px;top:822.5px;width:516px;height:1.2000000000000455px;background:#b4bcb9;"></div><div style="position:absolute;left:1215px;top:838px;width:516px;height:2px;background:#8c9595;"></div><div style="position:absolute;left:1215px;top:840px;width:516px;height:1.2000000000000455px;background:#b4bcb9;"></div><div style="position:absolute;left:1296.5px;top:576px;width:1.5px;height:264px;background:#969c9c;"></div><div style="position:absolute;left:1594px;top:545px;width:1.5px;height:295px;background:#969c9c;"></div><svg style="position:absolute;left:1203px;top:645px;" width="10" height="18" viewBox="0 0 10 18"><path d="M1 2 L8 9 L1 16 Z" fill="#d0d4d6"/></svg><div style="position:absolute;left:1220px;top:552.58px;font-size:19.4px;line-height:1;font-weight:400;color:#1e2a6a;white-space:nowrap;">KoZon</div><svg style="position:absolute;left:1282px;top:557px;" width="17" height="11" viewBox="0 0 17 11"><path d="M0 11 L8.5 0 L17 11 Z" fill="#1e2a6a"/></svg><div style="position:absolute;left:1301px;top:552.58px;font-size:19.4px;line-height:1;font-weight:400;color:#1d2326;white-space:nowrap;">Bezeichnung KoZone</div><div style="position:absolute;left:1597.5px;top:552.58px;font-size:19.4px;line-height:1;font-weight:400;color:#1d2326;white-space:nowrap;">Sachbearb</div><div style="position:absolute;left:1220px;top:583.08px;font-size:19.4px;line-height:1;font-weight:400;color:#161b1e;white-space:nowrap;">K1</div><div style="position:absolute;left:1301px;top:583.08px;font-size:19.4px;line-height:1;font-weight:400;color:#161b1e;white-space:nowrap;">Bereitstellung Versand</div><div style="position:absolute;left:1597.5px;top:583.08px;font-size:19.4px;line-height:1;font-weight:400;color:#161b1e;white-space:nowrap;">Zander</div><div style="position:absolute;left:1220px;top:613.58px;font-size:19.4px;line-height:1;font-weight:400;color:#161b1e;white-space:nowrap;">K2</div><div style="position:absolute;left:1301px;top:613.58px;font-size:19.4px;line-height:1;font-weight:400;color:#161b1e;white-space:nowrap;">Bereitstellung Produktion</div><div style="position:absolute;left:1597.5px;top:613.58px;font-size:19.4px;line-height:1;font-weight:400;color:#161b1e;white-space:nowrap;">Zander</div><div style="position:absolute;left:1220px;top:644.58px;font-size:19.4px;line-height:1;font-weight:400;color:#161b1e;white-space:nowrap;">K3</div><div style="position:absolute;left:1301px;top:644.58px;font-size:19.4px;line-height:1;font-weight:400;color:#161b1e;white-space:nowrap;">Bereitsstellung Umlagerung</div><div style="position:absolute;left:1597.5px;top:644.58px;font-size:19.4px;line-height:1;font-weight:400;color:#161b1e;white-space:nowrap;">Zander</div><div style="position:absolute;left:1220px;top:674.58px;font-size:19.4px;line-height:1;font-weight:400;color:#161b1e;white-space:nowrap;">V1</div><div style="position:absolute;left:1301px;top:674.58px;font-size:19.4px;line-height:1;font-weight:400;color:#161b1e;white-space:nowrap;">Versandlager Halle 1</div><div style="position:absolute;left:1597.5px;top:674.58px;font-size:19.4px;line-height:1;font-weight:400;color:#161b1e;white-space:nowrap;">Bauer</div><div style="position:absolute;left:1220px;top:706.08px;font-size:19.4px;line-height:1;font-weight:400;color:#161b1e;white-space:nowrap;">V2</div><div style="position:absolute;left:1301px;top:706.08px;font-size:19.4px;line-height:1;font-weight:400;color:#161b1e;white-space:nowrap;">Versandlager Halle 2</div><div style="position:absolute;left:1597.5px;top:706.08px;font-size:19.4px;line-height:1;font-weight:400;color:#161b1e;white-space:nowrap;">Bauer</div><div style="position:absolute;left:1196px;top:840px;width:535px;height:26px;background:#a6a7a7;border-bottom:2px solid #7c8484;"></div><svg style="position:absolute;left:1204px;top:845px;" width="14" height="16" viewBox="0 0 14 16"><path d="M11 1 L3 8 L11 15" fill="none" stroke="#111" stroke-width="3"/></svg><div style="position:absolute;left:1224px;top:843px;width:27px;height:21px;background:#878a8c;"></div><div style="position:absolute;right:2436.25px;top:893.75px;font-size:19.2px;line-height:1;font-weight:400;color:#22282b;white-space:nowrap;">Kommissionierzone</div><div style="position:absolute;right:2436.25px;top:932.50px;font-size:19.2px;line-height:1;font-weight:400;color:#22282b;white-space:nowrap;">Bezeichnung</div><div style="position:absolute;right:2436.25px;top:971.25px;font-size:19.2px;line-height:1;font-weight:400;color:#22282b;white-space:nowrap;">Sachbearbeiter</div><div style="position:absolute;right:2436.25px;top:1010.00px;font-size:19.2px;line-height:1;font-weight:400;color:#22282b;white-space:nowrap;">Verteilergruppe</div><div style="position:absolute;right:2436.25px;top:1050.00px;font-size:19.2px;line-height:1;font-weight:400;color:#22282b;white-space:nowrap;">Kommissionierlager</div><div style="position:absolute;right:2436.25px;top:1087.50px;font-size:19.2px;line-height:1;font-weight:400;color:#22282b;white-space:nowrap;">LO Packm Abgang</div><div style="position:absolute;right:2436.25px;top:1126.25px;font-size:19.2px;line-height:1;font-weight:400;color:#22282b;white-space:nowrap;">Priorität</div><div style="position:absolute;left:1409px;top:885px;width:116px;height:37px;background:#91a6b3;border:2px solid #3c4b55;"></div><div style="position:absolute;left:1414px;top:893.75px;font-size:19.2px;line-height:1;font-weight:400;color:#22282b;white-space:nowrap;">K3</div><div style="position:absolute;left:1413.75px;top:932.50px;font-size:19.2px;line-height:1;font-weight:400;color:#22282b;white-space:nowrap;">Bereitsstellung Umlagerung</div><div style="position:absolute;left:1413.75px;top:971.25px;font-size:19.2px;line-height:1;font-weight:400;color:#22282b;white-space:nowrap;">Zander</div><div style="position:absolute;left:1569.5px;top:971.25px;font-size:19.2px;line-height:1;font-weight:400;color:#22282b;white-space:nowrap;">Emil Zander</div><div style="position:absolute;left:1443.75px;top:1050.00px;font-size:19.2px;line-height:1;font-weight:400;color:#22282b;white-space:nowrap;transform:scaleX(0.91);transform-origin:left top;">13</div><div style="position:absolute;left:1530px;top:1050.00px;font-size:19.2px;line-height:1;font-weight:400;color:#22282b;white-space:nowrap;">Kommissionierlager Um</div><div style="position:absolute;left:1413.75px;top:1087.50px;font-size:19.2px;line-height:1;font-weight:400;color:#22282b;white-space:nowrap;">?</div><div style="position:absolute;left:1417.5px;top:1126.25px;font-size:19.2px;line-height:1;font-weight:400;color:#22282b;white-space:nowrap;">0</div><div style="position:absolute;left:2492px;top:601px;width:341px;height:521px;background:#a6afab;border-top:1.5px solid #6f7577;border-right:1.5px solid #7a8080;border-bottom:2px solid #70777a;"></div><div style="position:absolute;left:2492px;top:602px;width:314px;height:30.5px;background:#b6b9b8;"></div><div style="position:absolute;left:2492px;top:632.5px;width:309px;height:33.5px;background:#87919a;"></div><div style="position:absolute;left:2492px;top:692.25px;width:309px;height:2.0px;background:#8c9595;"></div><div style="position:absolute;left:2492px;top:694.25px;width:309px;height:1.2000000000000455px;background:#b4bcb9;"></div><div style="position:absolute;left:2492px;top:724.5px;width:309px;height:2.0px;background:#8c9595;"></div><div style="position:absolute;left:2492px;top:726.5px;width:309px;height:1.2000000000000455px;background:#b4bcb9;"></div><div style="position:absolute;left:2492px;top:755.5px;width:309px;height:2.0px;background:#8c9595;"></div><div style="position:absolute;left:2492px;top:757.5px;width:309px;height:1.2000000000000455px;background:#b4bcb9;"></div><div style="position:absolute;left:2492px;top:786.0px;width:309px;height:2.0px;background:#8c9595;"></div><div style="position:absolute;left:2492px;top:788.0px;width:309px;height:1.2000000000000455px;background:#b4bcb9;"></div><div style="position:absolute;left:2492px;top:817.25px;width:309px;height:2.0px;background:#8c9595;"></div><div style="position:absolute;left:2492px;top:819.25px;width:309px;height:1.2000000000000455px;background:#b4bcb9;"></div><div style="position:absolute;left:2492px;top:847.25px;width:309px;height:2.0px;background:#8c9595;"></div><div style="position:absolute;left:2492px;top:849.25px;width:309px;height:1.2000000000000455px;background:#b4bcb9;"></div><div style="position:absolute;left:2492px;top:878.0px;width:309px;height:2.0px;background:#8c9595;"></div><div style="position:absolute;left:2492px;top:880.0px;width:309px;height:1.2000000000000455px;background:#b4bcb9;"></div><div style="position:absolute;left:2492px;top:909.5px;width:309px;height:2.0px;background:#8c9595;"></div><div style="position:absolute;left:2492px;top:911.5px;width:309px;height:1.2000000000000455px;background:#b4bcb9;"></div><div style="position:absolute;left:2492px;top:939.5px;width:309px;height:2.0px;background:#8c9595;"></div><div style="position:absolute;left:2492px;top:941.5px;width:309px;height:1.2000000000000455px;background:#b4bcb9;"></div><div style="position:absolute;left:2492px;top:971.0px;width:309px;height:2.0px;background:#8c9595;"></div><div style="position:absolute;left:2492px;top:973.0px;width:309px;height:1.2000000000000455px;background:#b4bcb9;"></div><div style="position:absolute;left:2492px;top:1001.0px;width:309px;height:2.0px;background:#8c9595;"></div><div style="position:absolute;left:2492px;top:1003.0px;width:309px;height:1.2000000000000455px;background:#b4bcb9;"></div><div style="position:absolute;left:2492px;top:1031.0px;width:309px;height:2.0px;background:#8c9595;"></div><div style="position:absolute;left:2492px;top:1033.0px;width:309px;height:1.2000000000000455px;background:#b4bcb9;"></div><div style="position:absolute;left:2492px;top:1061.0px;width:309px;height:2.0px;background:#8c9595;"></div><div style="position:absolute;left:2492px;top:1063.0px;width:309px;height:1.2000000000000455px;background:#b4bcb9;"></div><div style="position:absolute;left:2492px;top:1091.0px;width:309px;height:2.0px;background:#8c9595;"></div><div style="position:absolute;left:2492px;top:1093.0px;width:309px;height:1.2000000000000455px;background:#b4bcb9;"></div><div style="position:absolute;left:2806px;top:602px;width:26px;height:518px;background:#a9a9a9;"></div><div style="position:absolute;left:2806px;top:632px;width:26px;height:368px;background:#8a8a8a;"></div><svg style="position:absolute;left:2810px;top:610px;" width="18" height="14" viewBox="0 0 18 14"><path d="M2 11 L9 3 L16 11" fill="none" stroke="#111" stroke-width="3"/></svg><svg style="position:absolute;left:2810px;top:1100px;" width="18" height="14" viewBox="0 0 18 14"><path d="M2 3 L9 11 L16 3" fill="none" stroke="#111" stroke-width="3"/></svg><div style="position:absolute;left:2494px;top:608.58px;font-size:19.4px;line-height:1;font-weight:400;color:#161b1e;white-space:nowrap;">Bezeichnung Lagerort</div><div style="position:absolute;left:2494px;top:639.08px;font-size:19.4px;line-height:1;font-weight:400;color:#161b1e;white-space:nowrap;">Hauptlager - Versand</div><div style="position:absolute;left:2494px;top:669.58px;font-size:19.4px;line-height:1;font-weight:400;color:#161b1e;white-space:nowrap;">Lager - chaotisch</div><div style="position:absolute;left:2494px;top:699.58px;font-size:19.4px;line-height:1;font-weight:400;color:#161b1e;white-space:nowrap;">Vorfertigungslager</div><div style="position:absolute;left:2494px;top:731.08px;font-size:19.4px;line-height:1;font-weight:400;color:#161b1e;white-space:nowrap;">Fertigungslager</div><div style="position:absolute;left:1732px;top:292px;width:761px;height:1302px;background:#f7f9f6;border-left:2.5px solid #4a96dc;border-right:2px solid #c4ecfa;border-bottom:2px solid #c4ecfa;"></div><div style="position:absolute;left:1732px;top:292px;width:761px;height:10px;background:#1a7bd3;"></div><div style="position:absolute;right:1897.5px;top:329.75px;font-size:19.2px;line-height:1;font-weight:400;color:#5b5d5e;white-space:nowrap;">bis Bedarfstermin</div><div style="position:absolute;left:1948px;top:322px;width:117px;height:36px;background:#fdfde1;border:1.5px solid #8a8a86;"></div><div style="position:absolute;left:1954px;top:329.25px;font-size:19.2px;line-height:1;font-weight:400;color:#1f2122;white-space:nowrap;transform:scaleX(0.91);transform-origin:left top;">12.06.2025</div><div style="position:absolute;right:1897.5px;top:368.25px;font-size:19.2px;line-height:1;font-weight:400;color:#5b5d5e;white-space:nowrap;">Kommissionierzone</div><div style="position:absolute;left:1948px;top:360.5px;width:117px;height:36.5px;background:#fdfde1;border:1.5px solid #8a8a86;"></div><div style="position:absolute;left:1954px;top:368.25px;font-size:19.2px;line-height:1;font-weight:400;color:#1f2122;white-space:nowrap;">K1</div><div style="position:absolute;left:1948px;top:408px;width:21px;height:21px;background:#fbfbfb;border:1.6px solid #333;"></div><div style="position:absolute;left:1975px;top:408.75px;font-size:19.2px;line-height:1;font-weight:400;color:#1f2122;white-space:nowrap;">Umlagerungen</div><div style="position:absolute;left:1949px;top:447.50px;font-size:19.2px;line-height:1;font-weight:400;color:#6a6c6d;white-space:nowrap;">von</div><div style="position:absolute;left:2249.5px;top:447.50px;font-size:19.2px;line-height:1;font-weight:400;color:#6a6c6d;white-space:nowrap;">bis</div><div style="position:absolute;right:1897.5px;top:484.75px;font-size:19.2px;line-height:1;font-weight:400;color:#5b5d5e;white-space:nowrap;">nach Lagerort</div><div style="position:absolute;left:1987px;top:484.75px;font-size:19.2px;line-height:1;font-weight:400;color:#1f2122;white-space:nowrap;">0</div><div style="position:absolute;left:2274px;top:484.75px;font-size:19.2px;line-height:1;font-weight:400;color:#1f2122;white-space:nowrap;transform:scaleX(0.91);transform-origin:left top;">7001</div><div style="position:absolute;right:1899px;top:524.75px;font-size:19.2px;line-height:1;font-weight:400;color:#5b5d5e;white-space:nowrap;">Teil</div><div style="position:absolute;left:1948px;top:515.5px;width:233px;height:37.5px;background:#fdfde1;border:1.5px solid #8a8a86;"></div><div style="position:absolute;left:2249px;top:515.5px;width:233px;height:37.5px;background:#fdfde1;border:1.5px solid #8a8a86;"></div><div style="position:absolute;left:2254px;top:525.61px;font-size:17px;line-height:1;font-weight:400;color:#333;white-space:nowrap;letter-spacing:-0.9px;">zzzzzzzzzzzzzzz</div><div style="position:absolute;left:1764.5px;top:565.75px;font-size:19.2px;line-height:1;font-weight:400;color:#5b5d5e;white-space:nowrap;">Vertrieb</div><div style="position:absolute;left:1835px;top:574px;width:627px;height:1.5px;background:#b3b4b2;"></div><div style="position:absolute;right:1897.5px;top:602.75px;font-size:19.2px;line-height:1;font-weight:400;color:#5b5d5e;white-space:nowrap;">Kunde</div><div style="position:absolute;left:1948px;top:593px;width:117px;height:37px;background:#fdfde1;border:1.5px solid #8a8a86;"></div><div style="position:absolute;left:2249px;top:593px;width:117px;height:37px;background:#fdfde1;border:1.5px solid #8a8a86;"></div><div style="position:absolute;left:2255px;top:601.25px;font-size:19.2px;line-height:1;font-weight:400;color:#1f2122;white-space:nowrap;transform:scaleX(0.91);transform-origin:left top;">99999999</div><div style="position:absolute;right:1897.5px;top:639.75px;font-size:19.2px;line-height:1;font-weight:400;color:#5b5d5e;white-space:nowrap;">Auftragsart</div><div style="position:absolute;left:1948px;top:632.5px;width:78px;height:36.0px;background:#fdfde1;border:1.5px solid #8a8a86;"></div><div style="position:absolute;left:2249px;top:632.5px;width:77px;height:36.0px;background:#fdfde1;border:1.5px solid #8a8a86;"></div><div style="position:absolute;left:2255px;top:639.75px;font-size:19.2px;line-height:1;font-weight:400;color:#1f2122;white-space:nowrap;">VB</div><div style="position:absolute;right:1897.5px;top:678.75px;font-size:19.2px;line-height:1;font-weight:400;color:#5b5d5e;white-space:nowrap;">Versandart</div><div style="position:absolute;left:1948px;top:671px;width:78px;height:37px;background:#fdfde1;border:1.5px solid #2f7ad0;"></div><div style="position:absolute;left:1953px;top:676px;width:20px;height:24px;background:#1f6fd0;"></div><div style="position:absolute;left:1955px;top:678.75px;font-size:19.2px;line-height:1;font-weight:400;color:#ffffff;white-space:nowrap;">0</div><div style="position:absolute;left:2249px;top:671px;width:77px;height:37px;background:#fdfde1;border:1.5px solid #8a8a86;"></div><div style="position:absolute;left:2255px;top:679.25px;font-size:19.2px;line-height:1;font-weight:400;color:#1f2122;white-space:nowrap;transform:scaleX(0.91);transform-origin:left top;">999</div><div style="position:absolute;right:1897.5px;top:719.25px;font-size:19.2px;line-height:1;font-weight:400;color:#5b5d5e;white-space:nowrap;">Belegoption</div><svg style="position:absolute;left:1947.5px;top:717.5px;" width="21" height="21" viewBox="0 0 21 21"><circle cx="10.5" cy="10.5" r="9" fill="#fbfbfb" stroke="#333" stroke-width="1.6"/><circle cx="10.5" cy="10.5" r="5" fill="#1a1a1a"/></svg><div style="position:absolute;left:1975px;top:719.25px;font-size:19.2px;line-height:1;font-weight:400;color:#1f2122;white-space:nowrap;">Bestände</div><svg style="position:absolute;left:1947.5px;top:756.5px;" width="21" height="21" viewBox="0 0 21 21"><circle cx="10.5" cy="10.5" r="9" fill="#fbfbfb" stroke="#333" stroke-width="1.6"/></svg><div style="position:absolute;left:1975px;top:758.25px;font-size:19.2px;line-height:1;font-weight:400;color:#1f2122;white-space:nowrap;">ohne Bestand</div><svg style="position:absolute;left:1947.5px;top:795px;" width="21" height="21" viewBox="0 0 21 21"><circle cx="10.5" cy="10.5" r="9" fill="#fbfbfb" stroke="#333" stroke-width="1.6"/></svg><div style="position:absolute;left:1975px;top:796.75px;font-size:19.2px;line-height:1;font-weight:400;color:#1f2122;white-space:nowrap;">beide</div><div style="position:absolute;left:1764.5px;top:817.50px;font-size:19.2px;line-height:1;font-weight:400;color:#5b5d5e;white-space:nowrap;">Produktion</div><div style="position:absolute;left:1864.5px;top:825.75px;width:597.5px;height:1.5px;background:#b3b4b2;"></div><div style="position:absolute;right:1897.5px;top:853.75px;font-size:19.2px;line-height:1;font-weight:400;color:#5b5d5e;white-space:nowrap;">Auftrag</div><div style="position:absolute;left:2253.75px;top:853.75px;font-size:19.2px;line-height:1;font-weight:400;color:#1f2122;white-space:nowrap;transform:scaleX(0.91);transform-origin:left top;">VUA-00000114</div><div style="position:absolute;right:1897.5px;top:892.50px;font-size:19.2px;line-height:1;font-weight:400;color:#5b5d5e;white-space:nowrap;">Rückmeldenummer</div><div style="position:absolute;left:1987px;top:892.50px;font-size:19.2px;line-height:1;font-weight:400;color:#1f2122;white-space:nowrap;">0</div><div style="position:absolute;left:2268.75px;top:892.50px;font-size:19.2px;line-height:1;font-weight:400;color:#1f2122;white-space:nowrap;transform:scaleX(0.91);transform-origin:left top;">15353</div><div style="position:absolute;right:1897.5px;top:931.25px;font-size:19.2px;line-height:1;font-weight:400;color:#5b5d5e;white-space:nowrap;">AktivitätenPos</div><div style="position:absolute;left:1967.5px;top:931.25px;font-size:19.2px;line-height:1;font-weight:400;color:#1f2122;white-space:nowrap;">0</div><div style="position:absolute;left:2253.75px;top:931.25px;font-size:19.2px;line-height:1;font-weight:400;color:#1f2122;white-space:nowrap;transform:scaleX(0.91);transform-origin:left top;">9999</div><div style="position:absolute;right:1897.5px;top:968.75px;font-size:19.2px;line-height:1;font-weight:400;color:#5b5d5e;white-space:nowrap;">Starttermin</div><div style="position:absolute;left:1953px;top:968.75px;font-size:19.2px;line-height:1;font-weight:400;color:#1f2122;white-space:nowrap;transform:scaleX(0.91);transform-origin:left top;">01.01.0001</div><div style="position:absolute;left:2253.75px;top:968.75px;font-size:19.2px;line-height:1;font-weight:400;color:#1f2122;white-space:nowrap;transform:scaleX(0.91);transform-origin:left top;">31.12.9999</div><div style="position:absolute;right:1897.5px;top:1008.25px;font-size:19.2px;line-height:1;font-weight:400;color:#5b5d5e;white-space:nowrap;">Wunschtermin</div><div style="position:absolute;left:1953px;top:1008.25px;font-size:19.2px;line-height:1;font-weight:400;color:#1f2122;white-space:nowrap;transform:scaleX(0.91);transform-origin:left top;">01.01.0001</div><div style="position:absolute;left:2253.75px;top:1008.25px;font-size:19.2px;line-height:1;font-weight:400;color:#1f2122;white-space:nowrap;transform:scaleX(0.91);transform-origin:left top;">31.12.9999</div><div style="position:absolute;right:1897.5px;top:1046.75px;font-size:19.2px;line-height:1;font-weight:400;color:#5b5d5e;white-space:nowrap;">Endtermin</div><div style="position:absolute;left:1953px;top:1046.75px;font-size:19.2px;line-height:1;font-weight:400;color:#1f2122;white-space:nowrap;transform:scaleX(0.91);transform-origin:left top;">01.01.0001</div><div style="position:absolute;left:2253.75px;top:1046.75px;font-size:19.2px;line-height:1;font-weight:400;color:#1f2122;white-space:nowrap;transform:scaleX(0.91);transform-origin:left top;">31.12.9999</div><svg style="position:absolute;left:1947.5px;top:1105.5px;" width="21" height="21" viewBox="0 0 21 21"><circle cx="10.5" cy="10.5" r="9" fill="#fbfbfb" stroke="#333" stroke-width="1.6"/><circle cx="10.5" cy="10.5" r="5" fill="#1a1a1a"/></svg><div style="position:absolute;left:1975px;top:1106.25px;font-size:19.2px;line-height:1;font-weight:400;color:#1f2122;white-space:nowrap;">keine Trennung</div><svg style="position:absolute;left:1947.5px;top:1144px;" width="21" height="21" viewBox="0 0 21 21"><circle cx="10.5" cy="10.5" r="9" fill="#fbfbfb" stroke="#333" stroke-width="1.6"/></svg><div style="position:absolute;left:1975px;top:1144.75px;font-size:19.2px;line-height:1;font-weight:400;color:#1f2122;white-space:nowrap;">Baugruppen trennen</div><svg style="position:absolute;left:1947.5px;top:1183px;" width="21" height="21" viewBox="0 0 21 21"><circle cx="10.5" cy="10.5" r="9" fill="#fbfbfb" stroke="#333" stroke-width="1.6"/></svg><div style="position:absolute;left:1975px;top:1183.75px;font-size:19.2px;line-height:1;font-weight:400;color:#1f2122;white-space:nowrap;">Aktivitäten trennen</div><div style="position:absolute;left:1764.5px;top:1204.25px;font-size:19.2px;line-height:1;font-weight:400;color:#5b5d5e;white-space:nowrap;">Projekt</div><div style="position:absolute;left:1831px;top:1212.5px;width:631px;height:1.5px;background:#b3b4b2;"></div><div style="position:absolute;right:1888px;top:1239.75px;font-size:19.2px;line-height:1;font-weight:400;color:#5b5d5e;white-space:nowrap;">Projekt</div><div style="position:absolute;left:1963px;top:1239.75px;font-size:19.2px;line-height:1;font-weight:400;color:#1f2122;white-space:nowrap;">Anlage 1000</div><div style="position:absolute;left:2263.75px;top:1239.75px;font-size:19.2px;line-height:1;font-weight:400;color:#1f2122;white-space:nowrap;transform:scaleX(0.91);transform-origin:left top;">PM10204466</div><div style="position:absolute;right:1888px;top:1278.75px;font-size:19.2px;line-height:1;font-weight:400;color:#5b5d5e;white-space:nowrap;">Projektvorgang</div><div style="position:absolute;left:2264px;top:1283.46px;font-size:16px;line-height:1;font-weight:400;color:#333;white-space:nowrap;letter-spacing:-0.9px;">zzzzzzzzzzzzzzzzzzzzzz</div><svg style="position:absolute;left:1958px;top:1319px;" width="21" height="21" viewBox="0 0 21 21"><rect x="1" y="1" width="18" height="18" fill="#f3f3f3" stroke="#c8c8c8" stroke-width="1.5"/><path d="M4 10 L8 14 L16 5" fill="none" stroke="#c0c0c0" stroke-width="2"/></svg><div style="position:absolute;left:1984.5px;top:1319.25px;font-size:19.2px;line-height:1;font-weight:400;color:#9c9e9f;white-space:nowrap;">Projektvorgänge trennen</div><div style="position:absolute;left:1764.5px;top:1340.75px;font-size:19.2px;line-height:1;font-weight:400;color:#5b5d5e;white-space:nowrap;">Drucksteuerung</div><div style="position:absolute;left:1905px;top:1349px;width:557px;height:1.5px;background:#b3b4b2;"></div><div style="position:absolute;right:1897.5px;top:1414.75px;font-size:19.2px;line-height:1;font-weight:400;color:#5b5d5e;white-space:nowrap;">Druckoption</div><svg style="position:absolute;left:1947.5px;top:1410.5px;" width="21" height="21" viewBox="0 0 21 21"><circle cx="10.5" cy="10.5" r="9" fill="#fbfbfb" stroke="#333" stroke-width="1.6"/></svg><div style="position:absolute;left:1975px;top:1411.25px;font-size:19.2px;line-height:1;font-weight:400;color:#1f2122;white-space:nowrap;">alle</div><svg style="position:absolute;left:1947.5px;top:1439.5px;" width="21" height="21" viewBox="0 0 21 21"><circle cx="10.5" cy="10.5" r="9" fill="#fbfbfb" stroke="#333" stroke-width="1.6"/></svg><div style="position:absolute;left:1975px;top:1439.75px;font-size:19.2px;line-height:1;font-weight:400;color:#1f2122;white-space:nowrap;">neu erzeugt</div><svg style="position:absolute;left:1947.5px;top:1468.5px;" width="21" height="21" viewBox="0 0 21 21"><circle cx="10.5" cy="10.5" r="9" fill="#fbfbfb" stroke="#333" stroke-width="1.6"/></svg><div style="position:absolute;left:1975px;top:1469.25px;font-size:19.2px;line-height:1;font-weight:400;color:#1f2122;white-space:nowrap;">komplett verfügbar</div><svg style="position:absolute;left:1947.5px;top:1497.5px;" width="21" height="21" viewBox="0 0 21 21"><circle cx="10.5" cy="10.5" r="9" fill="#fbfbfb" stroke="#333" stroke-width="1.6"/><circle cx="10.5" cy="10.5" r="5" fill="#1a1a1a"/></svg><div style="position:absolute;left:1975px;top:1498.75px;font-size:19.2px;line-height:1;font-weight:400;color:#1f2122;white-space:nowrap;">ohne</div><div style="position:absolute;left:1747px;top:1544.5px;width:112px;height:35.0px;background:#e4e4e4;border:2.5px solid #2f86d6;"></div><div style="position:absolute;left:803.0px;width:2000px;text-align:center;top:1551.75px;font-size:19.2px;line-height:1;font-weight:400;color:#1a1a1a;white-space:nowrap;">Start</div><div style="position:absolute;left:1872px;top:1544.5px;width:113px;height:35.0px;background:#e4e4e4;border:1.5px solid #adadad;"></div><div style="position:absolute;left:928.5px;width:2000px;text-align:center;top:1551.75px;font-size:19.2px;line-height:1;font-weight:400;color:#1a1a1a;white-space:nowrap;">Abbruch</div><div style="position:absolute;left:2100px;top:1544.5px;width:152px;height:35.0px;background:#e4e4e4;border:1.5px solid #adadad;"></div><div style="position:absolute;left:1176.0px;width:2000px;text-align:center;top:1551.75px;font-size:19.2px;line-height:1;font-weight:400;color:#1a1a1a;white-space:nowrap;">BA Bedarf</div><div style="position:absolute;left:2367px;top:1544.5px;width:113px;height:35.0px;background:#e4e4e4;border:1.5px solid #adadad;"></div><div style="position:absolute;left:1423.5px;width:2000px;text-align:center;top:1551.75px;font-size:19.2px;line-height:1;font-weight:400;color:#1a1a1a;white-space:nowrap;">Hilfe</div><svg style="position:absolute;left:2092px;top:684px;" width="80" height="100" viewBox="0 0 80 100"><defs><filter id="cs" x="-50%" y="-50%" width="200%" height="200%"><feGaussianBlur stdDeviation="4"/></filter>
      <filter id="cb" x="-20%" y="-20%" width="140%" height="140%"><feGaussianBlur stdDeviation="0.7"/></filter></defs>
      <path d="M15 14 L15.6 72 L29.4 60 L43 79 L48 74 L39.8 58 L55.6 55.3 Z" fill="#000" opacity="0.35" filter="url(#cs)" transform="translate(5,4)"/>
      <path d="M15 14 L15.6 72 L29.4 60 L43 79 L48 74 L39.8 58 L55.6 55.3 Z" fill="#fff" stroke="#2a2a2a" stroke-width="4" stroke-linejoin="round" filter="url(#cb)"/></svg>
</body></html>
